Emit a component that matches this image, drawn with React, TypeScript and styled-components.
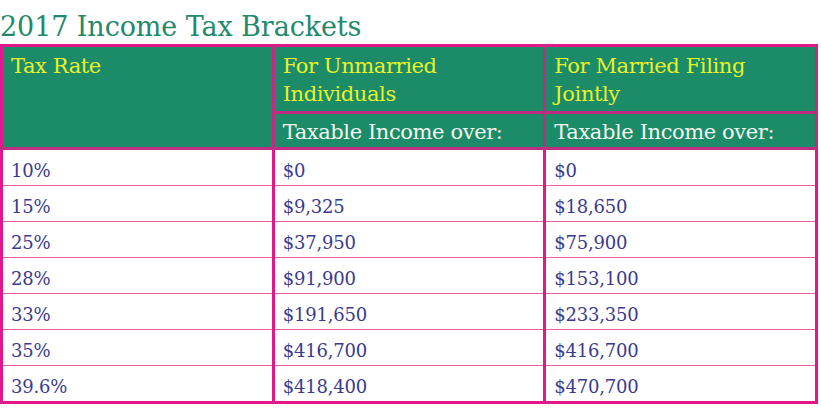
import React from 'react';
import styled, { createGlobalStyle } from 'styled-components';

const GlobalStyle = createGlobalStyle`
  body {
    margin: 0;
    background: #ffffff;
    font-family: "DejaVu Serif", "Liberation Serif", serif;
  }
`;

const rows = [
  ['10%', '$0', '$0'],
  ['15%', '$9,325', '$18,650'],
  ['25%', '$37,950', '$75,900'],
  ['28%', '$91,900', '$153,100'],
  ['33%', '$191,650', '$233,350'],
  ['35%', '$416,700', '$416,700'],
  ['39.6%', '$418,400', '$470,700'],
];

const App = () => {
  return (
    <Page>
      <GlobalStyle />
      <Title>2017 Income Tax Brackets</Title>
      <Table>
        <thead>
          <tr>
            <HeadCell rowSpan={2}>Tax Rate</HeadCell>
            <HeadCell>For Unmarried Individuals</HeadCell>
            <HeadCell>For Married Filing Jointly</HeadCell>
          </tr>
          <tr>
            <SubCell>Taxable Income over:</SubCell>
            <SubCell>Taxable Income over:</SubCell>
          </tr>
        </thead>
        <tbody>
          {rows.map((r) => (
            <tr key={r[0]}>
              {r.map((v, i) => (
                <BodyCell key={i}>{v}</BodyCell>
              ))}
            </tr>
          ))}
        </tbody>
      </Table>
    </Page>
  );
};

export default App;

const Page = styled.div`
  width: 821px;
  padding-top: 11px;
`;

const Title = styled.h1`
  margin: 0 0 2px 0;
  font-family: "DejaVu Serif", serif;
  font-weight: normal;
  font-size: 27px;
  line-height: 31px;
  color: #23896b;
  letter-spacing: -0.1px;
`;

const Table = styled.table`
  width: 818px;
  border-collapse: collapse;
  table-layout: fixed;
  border: 3px solid #e3178c;
`;

const HeadCell = styled.th`
  background: #1b8c67;
  color: #e8f02c;
  font-weight: normal;
  font-size: 21px;
  line-height: 28px;
  text-align: left;
  vertical-align: top;
  padding: 5px 8px 2px 8px;
  height: 57px;
  border: 3px solid #c02c84;
  border-left: 3px solid #e3178c;
  border-top: 3px solid #e3178c;
  letter-spacing: -0.4px;
`;

const SubCell = styled.th`
  background: #1b8c67;
  color: #f2f5ee;
  font-weight: normal;
  font-size: 21px;
  line-height: 24px;
  text-align: left;
  padding: 6px 8px 3px 8px;
  height: 24px;
  border: 3px solid #c02c84;
  border-left: 3px solid #e3178c;
  letter-spacing: -0.4px;
`;

const BodyCell = styled.td`
  color: #3b3a8e;
  font-size: 18px;
  line-height: 22px;
  padding: 10px 8px 3px 8px;
  height: 22px;
  border-left: 3px solid #e3178c;
  border-bottom: 1px solid #ec5fa9;
  letter-spacing: -0.2px;
`;
